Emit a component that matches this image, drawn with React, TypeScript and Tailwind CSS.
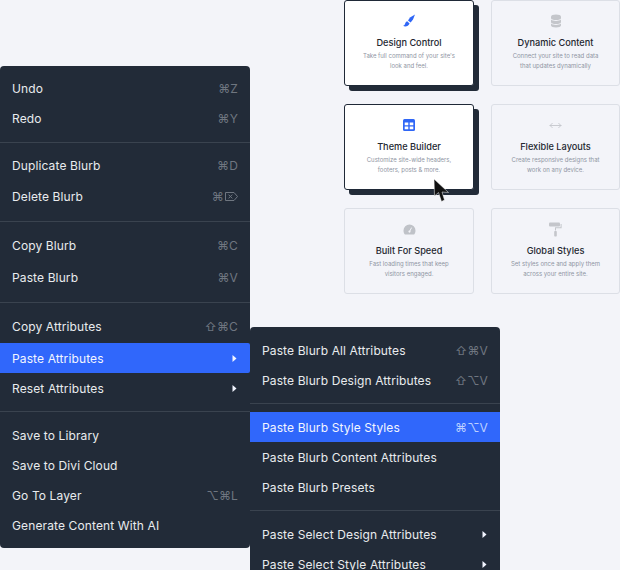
import { ReactNode } from 'react';
import { MoveHorizontal } from 'lucide-react';

const BrushIcon = () => (
  <svg width="14" height="14" viewBox="0 0 14 14" fill="#2f66f6">
    <path d="M13 0.5 L8 3.6 L6 6.5 L8.6 8.6 L11 5.6 Z" />
    <path d="M5.2 7.2 C3.6 7.4 3.4 9 2.8 10.4 C2.4 11.2 1.6 11.6 1 11.8 C3 13 6.4 12.6 7.6 9.4 Z" />
  </svg>
);

const DbIcon = () => (
  <svg width="12" height="14" viewBox="0 0 12 14" fill="#c4c6cb">
    <path d="M1 2.6C1 1.2 3.2 .5 6 .5s5 .7 5 2.1v1.6C11 5.4 8.8 6 6 6S1 5.4 1 4.2Z" />
    <path d="M1 5.6C2.2 6.6 4 7 6 7s3.8-.4 5-1.4v2.6C11 9.4 8.8 10 6 10S1 9.4 1 8.2Z" />
    <path d="M1 9.6C2.2 10.6 4 11 6 11s3.8-.4 5-1.4v2C11 12.8 8.8 13.5 6 13.5S1 12.8 1 11.6Z" />
  </svg>
);

const TableIcon = () => (
  <svg width="12" height="12" viewBox="0 0 12 12">
    <rect width="12" height="12" rx="1.5" fill="#2f66f6" />
    <path d="M1.7 3.4h3.6v2.8H1.7zM6.7 3.4h3.6v2.8H6.7zM1.7 7.5h3.6v2.8H1.7zM6.7 7.5h3.6v2.8H6.7z" fill="#fff" />
  </svg>
);

const GaugeIcon = () => (
  <svg width="13" height="11" viewBox="0 0 13 11">
    <path d="M6.5 .5A6 6 0 0 0 .5 6.5c0 1.6.5 3 1.4 4h9.2c.9-1 1.4-2.4 1.4-4a6 6 0 0 0-6-6Z" fill="#bfc2c8" />
    <path d="M8.6 3.6 6.6 7.4" stroke="#f3f4f9" strokeWidth="1" fill="none" />
    <circle cx="6.5" cy="7.6" r="1.1" fill="#f3f4f9" />
  </svg>
);

const RollerIcon = () => (
  <svg width="13" height="15" viewBox="0 0 13 15" fill="#c4c6cb">
    <rect x="0" y="0.5" width="11" height="4" rx="1" />
    <path d="M11.6 2h1v4.2H7v2.2H6V5.2h5.6Z" />
    <rect x="5.2" y="9" width="2.6" height="5.5" rx=".8" />
  </svg>
);

type Card = { title: string; lines: [string, string]; icon: ReactNode; active?: boolean };

const cards: Card[] = [
  { title: 'Design Control', lines: ["Take full command of your site's", 'look and feel.'], icon: <BrushIcon />, active: true },
  { title: 'Dynamic Content', lines: ['Connect your site to read data', 'that updates dynamically'], icon: <DbIcon /> },
  { title: 'Theme Builder', lines: ['Customize site-wide headers,', 'footers, posts & more.'], icon: <TableIcon />, active: true },
  { title: 'Flexible Layouts', lines: ['Create responsive designs that', 'work on any device.'], icon: <MoveHorizontal size={13} color="#bfc2c8" strokeWidth={1.5} /> },
  { title: 'Built For Speed', lines: ['Fast loading times that keep', 'visitors engaged.'], icon: <GaugeIcon /> },
  { title: 'Global Styles', lines: ['Set styles once and apply them', 'across your entire site.'], icon: <RollerIcon /> },
];

function FeatureCard({ card }: { card: Card }) {
  return (
    <div
      className={
        card.active
          ? 'flex h-[86px] flex-col items-center rounded-[3px] border border-[#1f2937] bg-white shadow-[5px_5px_0_0_#222b38]'
          : 'flex h-[86px] flex-col items-center rounded-[3px] border border-[#dcdfe6] bg-[#f3f4f9]'
      }
    >
      <div className="mt-[13px] flex h-[14px] items-center justify-center">{card.icon}</div>
      <div className="mt-[8px] text-[9.2px] font-medium leading-[14px] text-[#23272f]">{card.title}</div>
      <div className="mt-[1px] text-center text-[6px] leading-[10px] text-[#8f95a3]">
        <div>{card.lines[0]}</div>
        <div>{card.lines[1]}</div>
      </div>
    </div>
  );
}

type Row = {
  label: string;
  keys?: ReactNode;
  arrow?: boolean;
  active?: boolean;
  className?: string;
};

const DeleteKey = () => (
  <svg width="13" height="9" viewBox="0 0 13 9" fill="none" stroke="#6f7680" strokeWidth="1" className="ml-[1px]">
    <path d="M.5.5h8.5l3.5 4-3.5 4H.5Z" />
    <path d="M3.5 2.6l3.8 3.8M7.3 2.6 3.5 6.4" />
  </svg>
);

function MenuRow({ row }: { row: Row }) {
  return (
    <div
      className={`flex h-[30px] items-center justify-between pl-3 pr-3 pt-px text-[12px] tracking-[0.01em] ${
        row.active ? 'bg-[#3067fb] text-[#f2f5ff]' : 'text-[#e9ebee]'
      } ${row.className ?? ''}`}
    >
      <span>{row.label}</span>
      {row.keys && (
        <span className={`flex items-center ${row.active ? 'text-[#bcd0ff]' : 'text-[#6f7680]'}`}>{row.keys}</span>
      )}
      {row.arrow && (
        <svg width="5" height="7" viewBox="0 0 5 7" fill="#f2f5ff" className="mr-[1px]">
          <path d="M0.5 0 L4.5 3.5 L0.5 7 Z" />
        </svg>
      )}
    </div>
  );
}

const Divider = ({ className = 'my-2' }: { className?: string }) => <div className={`h-px bg-[#3a434f] ${className}`} />;

export default function App() {
  return (
    <div className="relative h-[570px] w-[620px] overflow-hidden bg-[#f3f4f9] font-['Inter',sans-serif]">
      <div className="ml-[344px] grid w-[276px] grid-cols-[130px_129px] gap-x-[17px] gap-y-[18px]">
        {cards.map(c => (
          <FeatureCard key={c.title} card={c} />
        ))}
      </div>

      {/* pointer over the theme builder card */}
      <svg width="17" height="24" viewBox="0 0 17 24" className="absolute left-[433px] top-[179px]">
        <path d="M1 0 L1.5 17 L5.5 13.5 L8.5 22.5 L11.5 21 L9 13 L15.5 13.5 Z" fill="#111" stroke="#fff" strokeWidth="0.5" />
      </svg>

      <div className="absolute left-0 top-[66px] w-[250px] rounded-[4px] bg-[#222b38] pb-2 pt-[7px]">
        <MenuRow row={{ label: 'Undo', keys: '⌘Z' }} />
        <MenuRow row={{ label: 'Redo', keys: '⌘Y' }} />
        <Divider className="mb-[7px] mt-[9px]" />
        <MenuRow row={{ label: 'Duplicate Blurb', keys: '⌘D' }} />
        <MenuRow row={{ label: 'Delete Blurb', keys: <>⌘<DeleteKey /></>, className: 'mt-px' }} />
        <Divider className="mb-2 mt-[10px]" />
        <MenuRow row={{ label: 'Copy Blurb', keys: '⌘C' }} />
        <MenuRow row={{ label: 'Paste Blurb', keys: '⌘V', className: 'mt-0.5' }} />
        <Divider className="mb-2 mt-[10px]" />
        <MenuRow row={{ label: 'Copy Attributes', keys: '⇧⌘C' }} />
        <MenuRow row={{ label: 'Paste Attributes', arrow: true, active: true, className: 'mt-0.5 rounded-r-[2px]' }} />
        <MenuRow row={{ label: 'Reset Attributes', arrow: true }} />
        <Divider />
        <MenuRow row={{ label: 'Save to Library' }} />
        <MenuRow row={{ label: 'Save to Divi Cloud' }} />
        <MenuRow row={{ label: 'Go To Layer', keys: '⌥⌘L' }} />
        <MenuRow row={{ label: 'Generate Content With AI' }} />
      </div>

      <div className="absolute left-[250px] top-[327px] w-[250px] rounded-[4px] bg-[#222b38] pb-2 pt-2">
        <MenuRow row={{ label: 'Paste Blurb All Attributes', keys: '⇧⌘V' }} />
        <MenuRow row={{ label: 'Paste Blurb Design Attributes', keys: '⇧⌥V' }} />
        <Divider />
        <MenuRow row={{ label: 'Paste Blurb Style Styles', keys: '⌘⌥V', active: true }} />
        <MenuRow row={{ label: 'Paste Blurb Content Attributes' }} />
        <MenuRow row={{ label: 'Paste Blurb Presets' }} />
        <Divider />
        <MenuRow row={{ label: 'Paste Select Design Attributes', arrow: true }} />
        <MenuRow row={{ label: 'Paste Select Style Attributes', arrow: true }} />
      </div>
    </div>
  );
}
